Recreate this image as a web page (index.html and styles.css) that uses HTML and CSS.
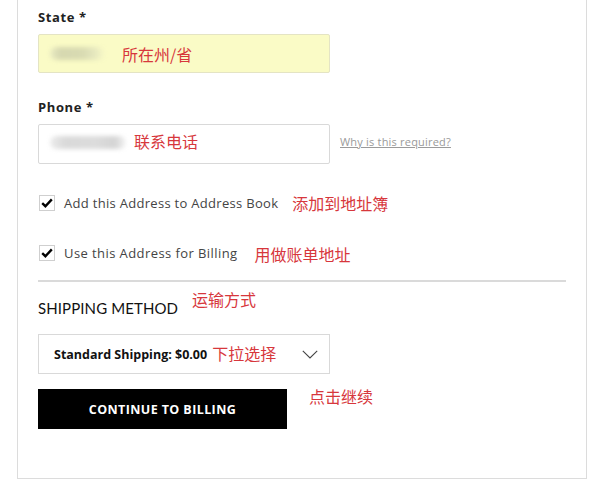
FILE: index.html
```html
<!DOCTYPE html>
<html>
<head>
<meta charset="utf-8">
<link rel="stylesheet" href="styles.css">
</head>
<body>
<div class="card">
  <div class="label">State *</div>
  <div class="input input-filled">
    <span class="blur blur-state"></span>
    <span class="note note-state">所在州/省</span>
  </div>

  <div class="label label-phone">Phone *</div>
  <div class="field-row">
    <div class="input">
      <span class="blur blur-phone"></span>
      <span class="note note-phone">联系电话</span>
    </div>
    <a class="why" href="#">Why is this required?</a>
  </div>

  <div class="check-row check-first">
    <span class="box"><svg width="12" height="10" viewBox="0 0 12 10"><path d="M1.2 5.2 L4.4 8.2 L10.8 1.4" fill="none" stroke="#000" stroke-width="2.4"/></svg></span>
    <span class="check-text">Add this Address to Address Book</span>
    <span class="note note-book">添加到地址簿</span>
  </div>

  <div class="check-row check-second">
    <span class="box"><svg width="12" height="10" viewBox="0 0 12 10"><path d="M1.2 5.2 L4.4 8.2 L10.8 1.4" fill="none" stroke="#000" stroke-width="2.4"/></svg></span>
    <span class="check-text check-text-wide">Use this Address for Billing</span>
    <span class="note note-billing">用做账单地址</span>
  </div>

  <div class="divider"></div>

  <div class="heading-row">
    <span class="heading">SHIPPING METHOD</span>
    <span class="note note-heading">运输方式</span>
  </div>

  <div class="select">
    <span class="select-text">Standard Shipping: $0.00</span>
    <span class="note note-select">下拉选择</span>
    <svg class="chevron" width="16" height="9" viewBox="0 0 16 9"><path d="M0.8 0.8 L8 8 L15.2 0.8" fill="none" stroke="#444" stroke-width="1.1"/></svg>
  </div>

  <div class="button-row">
    <button class="btn">CONTINUE TO BILLING</button>
    <span class="note note-btn">点击继续</span>
  </div>
</div>
</body>
</html>
```

FILE: styles.css
```css
html, body {
  margin: 0;
  padding: 0;
  background: #fff;
}

body {
  font-family: "Open Sans", "Noto Sans CJK SC", sans-serif;
  color: #222;
}

.card {
  box-sizing: border-box;
  margin-left: 17px;
  width: 570px;
  height: 479px;
  border: 1px solid #dcdcdc;
  border-top: 0;
  padding: 9px 20px 0 20px;
}

.label {
  font-size: 13px;
  line-height: 16px;
  font-weight: 700;
  letter-spacing: 0.6px;
  color: #222;
  margin-bottom: 9px;
}

.label-phone {
  margin-top: 26px;
}

.input {
  box-sizing: border-box;
  width: 292px;
  height: 39px;
  border: 1px solid #d9d9d9;
  border-radius: 2px;
  background: #fff;
  display: flex;
  align-items: center;
  padding-left: 11px;
}

.input-filled {
  background: #fafbc6;
  border-color: #e4e4c4;
}

.field-row {
  display: flex;
  align-items: center;
  gap: 10px;
}

.field-row .input {
  height: 40px;
}

.why {
  font-size: 11px;
  color: #9a9a9a;
  text-decoration: underline;
  letter-spacing: 0.2px;
  margin-bottom: 6px;
}

.blur {
  display: inline-block;
  height: 13px;
  border-radius: 7px;
  filter: blur(2px);
}

.blur-state {
  width: 54px;
  background: linear-gradient(90deg, #e9ebc2 0%, #d6d8b0 20%, #d9dbb2 60%, #e4e6bd 80%, #f6f7c6 100%);
}

.blur-phone {
  width: 76px;
  margin-bottom: 4px;
  background: linear-gradient(90deg, #ececec 0%, #d9d9d9 20%, #dcdcdc 60%, #d4d4d4 85%, #f4f4f4 100%);
}

.note {
  font-family: "Noto Sans CJK SC", sans-serif;
  font-size: 16px;
  line-height: 20px;
  color: #d7373c;
  white-space: nowrap;
}

.note-state {
  margin-left: 18px;
}

.note-phone {
  margin-left: 8px;
  margin-bottom: 6px;
}

.check-row {
  display: flex;
  align-items: center;
  height: 20px;
}

.check-first {
  margin-top: 29px;
}

.check-second {
  margin-top: 30px;
}

.box {
  box-sizing: border-box;
  width: 16px;
  height: 16px;
  border: 1px solid #cfcfcf;
  display: flex;
  align-items: center;
  justify-content: center;
  margin-left: 1px;
  margin-right: 9px;
}

.check-text {
  font-size: 13px;
  color: #444;
  letter-spacing: 0.3px;
}

.check-text-wide {
  letter-spacing: 0.42px;
}

.note-book {
  margin-left: 14px;
  margin-top: 0;
}

.note-billing {
  margin-left: 17px;
  margin-top: 1px;
}

.divider {
  height: 2px;
  background: #dadada;
  margin-top: 17px;
}

.heading-row {
  display: flex;
  align-items: flex-start;
  margin-top: 16px;
  height: 20px;
}

.heading {
  font-family: "Lato", sans-serif;
  font-size: 15px;
  line-height: 20px;
  letter-spacing: 0.1px;
  color: #111;
}

.note-heading {
  margin-left: 14px;
  margin-top: -9px;
}

.select {
  box-sizing: border-box;
  width: 292px;
  height: 40px;
  margin-top: 16px;
  border: 1px solid #d9d9d9;
  display: flex;
  align-items: center;
  padding-left: 15px;
}

.select-text {
  font-size: 12.5px;
  font-weight: 700;
  color: #111;
}

.note-select {
  margin-left: 5px;
  margin-bottom: 3px;
}

.chevron {
  margin-left: auto;
  margin-right: 11px;
}

.button-row {
  display: flex;
  align-items: flex-start;
  margin-top: 15px;
}

.btn {
  width: 249px;
  height: 40px;
  background: #000;
  border: 0;
  color: #fff;
  font-family: "Open Sans", sans-serif;
  font-size: 12.5px;
  font-weight: 700;
  letter-spacing: 0.4px;
  padding: 0;
  padding-top: 1px;
}

.note-btn {
  margin-left: 22px;
  margin-top: -3px;
}
```
